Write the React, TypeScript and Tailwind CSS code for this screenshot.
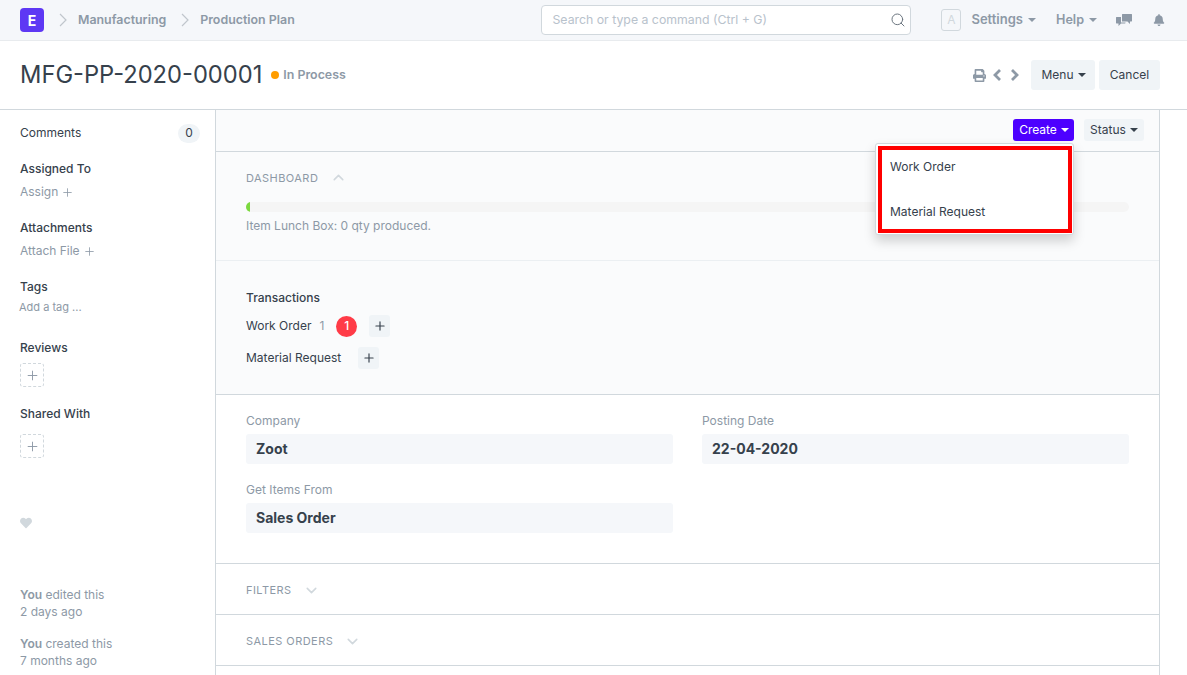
import { ChevronDown, ChevronUp, Plus, Search } from "lucide-react";
import { FaBell, FaHeart, FaPrint } from "react-icons/fa";

function Caret({ className = "" }: { className?: string }) {
  return <span className={`inline-block w-0 h-0 border-x-[4px] border-x-transparent border-t-[4px] border-t-current ${className}`} />;
}

function Breadcrumb({ label }: { label: string }) {
  return (
    <>
      <svg width="8" height="14" viewBox="0 0 8 14" fill="none" className="text-[#c0c6cc]">
        <path d="M1 1l6 6-6 6" stroke="currentColor" strokeWidth="1.2" />
      </svg>
      <span className="text-[12.4px] font-semibold text-[#8d99a6] ml-[11px] mr-[15px]">{label}</span>
    </>
  );
}

function CommentsIcon() {
  return (
    <svg width="16" height="13" viewBox="0 0 16 13" className="text-[#8d99a6] mr-[21px]" fill="currentColor">
      <path d="M6 0.5C6 0.2 6.2 0 6.5 0h9c.3 0 .5.2.5.5v6.5c0 .3-.2.5-.5.5h-1.500v2.500l-2.500-2.500H6z" />
      <path d="M0 3.500c0-.3.2-.5.5-.5H5v5.500h4.500V9c0 .3-.2.5-.5.5H5l-2.500 2.500V9.500H.5c-.3 0-.5-.2-.5-.5z" />
    </svg>
  );
}

function Navbar() {
  return (
    <header className="h-[41px] bg-[#f5f7fa] border-b border-[#e8ebee] flex items-center pl-5 pr-[22px]">
      <div className="w-6 h-6 rounded-[4px] bg-[#5e38f4] text-white text-[14px] font-bold flex items-center justify-center mr-[15px]">E</div>
      <Breadcrumb label="Manufacturing" />
      <Breadcrumb label="Production Plan" />
      <div className="ml-auto w-[370px] h-[30px] mr-[30px] bg-white border border-[#d1d8dd] rounded-[4px] flex items-center justify-between pl-[10px] pr-1">
        <span className="text-[12.3px] text-[#b8c2cc]">Search or type a command (Ctrl + G)</span>
        <Search size={16} strokeWidth={1.5} className="text-[#6c7680]" />
      </div>
      <div className="w-5 h-[22px] border border-[#d1d8dd] rounded-[3px] text-[#d1d8dd] text-[12px] flex items-center justify-center mr-2.5">A</div>
      <span className="text-[13px] font-semibold text-[#8d99a6] flex items-center gap-[5px] mr-5">Settings <Caret /></span>
      <span className="text-[12.6px] font-semibold text-[#8d99a6] flex items-center gap-[5px] mr-[19px]">Help <Caret /></span>
      <CommentsIcon />
      <FaBell size={12} className="text-[#8d99a6]" />
    </header>
  );
}

function TitleBar() {
  return (
    <div className="h-[69px] bg-white border-b border-[#d1d8dd] flex items-center pl-5 pr-[27px]">
      <h1 className="text-[23.7px] font-normal text-[#36414c] leading-none">MFG-PP-2020-00001</h1>
      <span className="w-2 h-2 rounded-full bg-[#ff9d00] ml-[9px]"></span>
      <span className="text-[12.4px] font-semibold text-[#8d99a6] ml-1">In Process</span>
      <FaPrint size={13} className="text-[#8d99a6] ml-auto mr-[7px]" />
      <svg width="9" height="12" viewBox="0 0 9 12" fill="none" className="text-[#8d99a6] mr-2">
        <path d="M7 1L2 6l5 5" stroke="currentColor" strokeWidth="2.8" />
      </svg>
      <svg width="9" height="12" viewBox="0 0 9 12" fill="none" className="text-[#8d99a6] mr-3">
        <path d="M2 1l5 5-5 5" stroke="currentColor" strokeWidth="2.8" />
      </svg>
      <button className="h-[30px] w-16 rounded-[3px] bg-[#f0f4f7] text-[12px] text-[#36414c] flex items-center justify-center gap-1 pl-px">Menu <Caret /></button>
      <button className="h-[30px] w-[61px] ml-1 rounded-[3px] bg-[#f0f4f7] text-[12px] text-[#36414c]">Cancel</button>
    </div>
  );
}

function SideHeading({ children }: { children: string }) {
  return <div className="text-[12px] font-medium text-[#36414c] leading-[18px]">{children}</div>;
}

function AddBox() {
  return (
    <div className="w-6 h-6 border border-dashed border-[#d1d8dd] rounded-[3px] flex items-center justify-center">
      <Plus size={15} strokeWidth={1.5} className="text-[#8d99a6]" />
    </div>
  );
}

function Sidebar() {
  return (
    <aside className="w-[216px] shrink-0 border-r border-[#d1d8dd] bg-white pl-5 pr-[15px] pt-3 text-[12px] flex flex-col">
      <div className="flex items-center justify-between h-[22px]">
        <span className="text-[#36414c]">Comments</span>
        <span className="w-[22px] h-[19px] rounded-full bg-[#f0f4f7] text-[#36414c] flex items-center justify-center">0</span>
      </div>
      <div className="mt-[16px]"><SideHeading>Assigned To</SideHeading></div>
      <div className="mt-[5px] flex items-center gap-[3px] text-[#8d99a6] leading-[18px]">Assign <Plus size={13} strokeWidth={1.5} /></div>
      <div className="mt-[18px]"><SideHeading>Attachments</SideHeading></div>
      <div className="mt-[5px] flex items-center gap-[3px] text-[#8d99a6] leading-[18px]">Attach File <Plus size={13} strokeWidth={1.5} /></div>
      <div className="mt-[18px]"><SideHeading>Tags</SideHeading></div>
      <div className="mt-[2px] -ml-px text-[11px] text-[#8d99a6] leading-[18px]">Add a tag ...</div>
      <div className="mt-[23px]"><SideHeading>Reviews</SideHeading></div>
      <div className="mt-[6px]"><AddBox /></div>
      <div className="mt-[18px]"><SideHeading>Shared With</SideHeading></div>
      <div className="mt-[11px]"><AddBox /></div>
      <FaHeart size={12} className="text-[#d1d8dd] mt-[59px]" />
      <div className="mt-[57px] leading-[17px] text-[#8d99a6]"><b className="font-semibold">You</b> edited this<br />2 days ago</div>
      <div className="mt-[15px] leading-[17px] text-[#8d99a6]"><b className="font-semibold">You</b> created this<br />7 months ago</div>
    </aside>
  );
}

function Field({ label, value }: { label: string; value: string }) {
  return (
    <div>
      <div className="text-[12px] text-[#8d99a6] leading-[18px] mb-1">{label}</div>
      <div className="h-[30px] bg-[#f5f7fa] rounded-[3px] pl-2.5 pb-[2px] flex items-center text-[14px] font-bold text-[#36414c]">{value}</div>
    </div>
  );
}

function CollapsedSection({ label }: { label: string }) {
  return (
    <div className="h-[51px] border-b border-[#d1d8dd] pl-[30px] pt-[2px] flex items-center gap-[11px] text-[11px] tracking-[0.45px] text-[#8d99a6] bg-white">
      {label} <ChevronDown size={17} strokeWidth={2.2} className="text-[#d1d8dd]" />
    </div>
  );
}

function CreateMenu() {
  return (
    <div className="absolute right-[85px] top-[33px] w-[199px] h-[92px] bg-white border border-[#d1d8dd] rounded-[3px] shadow-[0_6px_12px_rgba(0,0,0,0.175)] pt-[2px] pl-[2px] z-10">
      <div className="w-[194px] h-[87px] border-4 border-[#ff0000] text-[12px] text-[#36414c] pl-2 pt-2">
        <div className="leading-[18px]">Work Order</div>
        <div className="leading-[18px] mt-[27px]">Material Request</div>
      </div>
    </div>
  );
}

function Main() {
  return (
    <main className="w-[944px] shrink-0 border-r border-[#d1d8dd]">
      <div className="relative h-[42px] bg-[#fafbfc] border-b border-[#d1d8dd] flex items-center justify-end gap-[10px] pr-[15px] pb-[2px]">
        <button className="h-[22px] w-[61px] rounded-[3px] bg-[#4d00ff] text-white text-[12px] flex items-center justify-center gap-1 pl-px">Create <Caret /></button>
        <button className="h-[22px] w-[60px] rounded-[3px] bg-[#f0f4f7] text-[#36414c] text-[12px] flex items-center justify-center gap-1">Status <Caret /></button>
        <CreateMenu />
      </div>
      <section className="h-[109px] bg-[#fafbfc] border-b border-[#ebeff2] pl-[30px] pr-[30px] pt-[17px]">
        <div className="flex items-center gap-[12px] text-[11px] tracking-[0.45px] text-[#8d99a6] leading-[16px]">
          DASHBOARD <ChevronUp size={17} strokeWidth={2.2} className="text-[#d1d8dd]" />
        </div>
        <div className="mt-4 h-[10px] rounded-full bg-[#f5f5f5] overflow-hidden">
          <div className="h-full w-[4px] bg-[#7cd93f]"></div>
        </div>
        <div className="mt-[5px] text-[12px] text-[#8d99a6] leading-[18px]">Item Lunch Box: 0 qty produced.</div>
      </section>
      <section className="h-[134px] bg-[#fafbfc] border-b border-[#d1d8dd] pl-[30px] pt-[28px] text-[12px] text-[#36414c]">
        <div className="font-medium leading-[18px]">Transactions</div>
        <div className="flex items-center mt-2 h-[22px]">
          Work Order
          <span className="text-[#8d99a6] ml-2">1</span>
          <span className="w-[21px] h-[21px] rounded-full bg-[#ff3b47] text-white font-medium flex items-center justify-center ml-3">1</span>
          <span className="w-[21px] h-[22px] rounded-[3px] bg-[#f0f4f7] flex items-center justify-center ml-3"><Plus size={14} strokeWidth={2} /></span>
        </div>
        <div className="flex items-center mt-[10px] h-[22px]">
          Material Request
          <span className="w-[21px] h-[22px] rounded-[3px] bg-[#f0f4f7] flex items-center justify-center ml-[17px]"><Plus size={14} strokeWidth={2} /></span>
        </div>
      </section>
      <section className="h-[169px] bg-white border-b border-[#d1d8dd] px-[30px] pt-[17px] grid grid-cols-2 gap-x-[29px] gap-y-[17px] content-start">
        <Field label="Company" value="Zoot" />
        <Field label="Posting Date" value="22-04-2020" />
        <Field label="Get Items From" value="Sales Order" />
      </section>
      <CollapsedSection label="FILTERS" />
      <CollapsedSection label="SALES ORDERS" />
    </main>
  );
}

export default function App() {
  return (
    <div className="w-[1187px] h-[675px] overflow-hidden bg-white font-['Inter',sans-serif]">
      <Navbar />
      <TitleBar />
      <div className="flex h-[566px]">
        <Sidebar />
        <Main />
      </div>
    </div>
  );
}
